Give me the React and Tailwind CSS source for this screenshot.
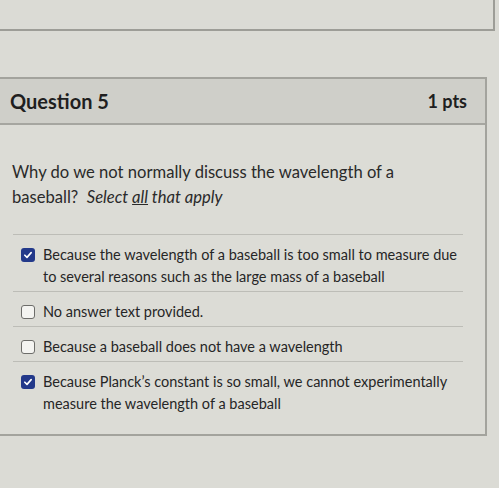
import React from "react";

const answers = [
  {
    text: "Because the wavelength of a baseball is too small to measure due to several reasons such as the large mass of a baseball",
    checked: true,
  },
  { text: "No answer text provided.", checked: false },
  { text: "Because a baseball does not have a wavelength", checked: false },
  {
    text: "Because Planck\u2019s constant is so small, we cannot experimentally measure the wavelength of a baseball",
    checked: true,
  },
];

const Checkbox = ({ checked }) =>
  checked ? (
    <span className="mt-[4px] flex h-[14px] w-[14px] shrink-0 items-center justify-center rounded-[3px] bg-[#23398a]">
      <svg viewBox="0 0 12 12" className="h-[10px] w-[10px]">
        <path d="M2.2 6.3 L4.8 8.8 L9.8 3.2" fill="none" stroke="#fff" strokeWidth="2" strokeLinecap="round" strokeLinejoin="round" />
      </svg>
    </span>
  ) : (
    <span className="mt-[4px] h-[14px] w-[14px] shrink-0 rounded-[3px] border-[1.5px] border-[#6d6d6a] bg-[#f4f4f1]" />
  );

export default function App() {
  return (
    <div
      className="h-[488px] w-[499px] overflow-hidden bg-[#dbdbd5] text-[#2b2b2b]"
      style={{ fontFamily: "Lato, 'Open Sans', sans-serif" }}
    >
      <div className="h-[31px] w-[495px] border-b-2 border-r-2 border-[#9d9d97]" />

      <div className="mt-[46px] w-[487px] border-y-2 border-r-2 border-[#a3a39d] bg-[#dcdcd6]">
        <div className="flex h-[46px] items-center justify-between border-b-2 border-[#a6a6a0] bg-[#cfcfc9] pl-[10px] pr-[18px]">
          <h2 className="text-[20px] font-bold text-[#1f1f1f]">Question 5</h2>
          <span className="text-[18px] font-bold text-[#1f1f1f]">1 pts</span>
        </div>

        <div className="px-[12px] pt-[35px]">
          <p className="w-[400px] text-[16.6px] leading-[25px] text-[#2a2a2a]">
            Why do we not normally discuss the wavelength of a baseball?&nbsp;{" "}
            <em>
              Select <u>all</u> that apply
            </em>
          </p>
        </div>

        <div className="ml-[13px] mt-[24px] w-[450px] border-t border-[#bdbdb7] pb-[16px]">
          {answers.map((a, i) => (
            <div
              key={i}
              className={`flex gap-[8px] pb-[3px] pt-[9px] pl-[8px] ${i < answers.length - 1 ? "border-b border-[#bdbdb7]" : ""}`}
            >
              <Checkbox checked={a.checked} />
              <p className="w-[420px] text-[14.5px] leading-[22px] text-[#262626]">{a.text}</p>
            </div>
          ))}
        </div>
      </div>
    </div>
  );
}
